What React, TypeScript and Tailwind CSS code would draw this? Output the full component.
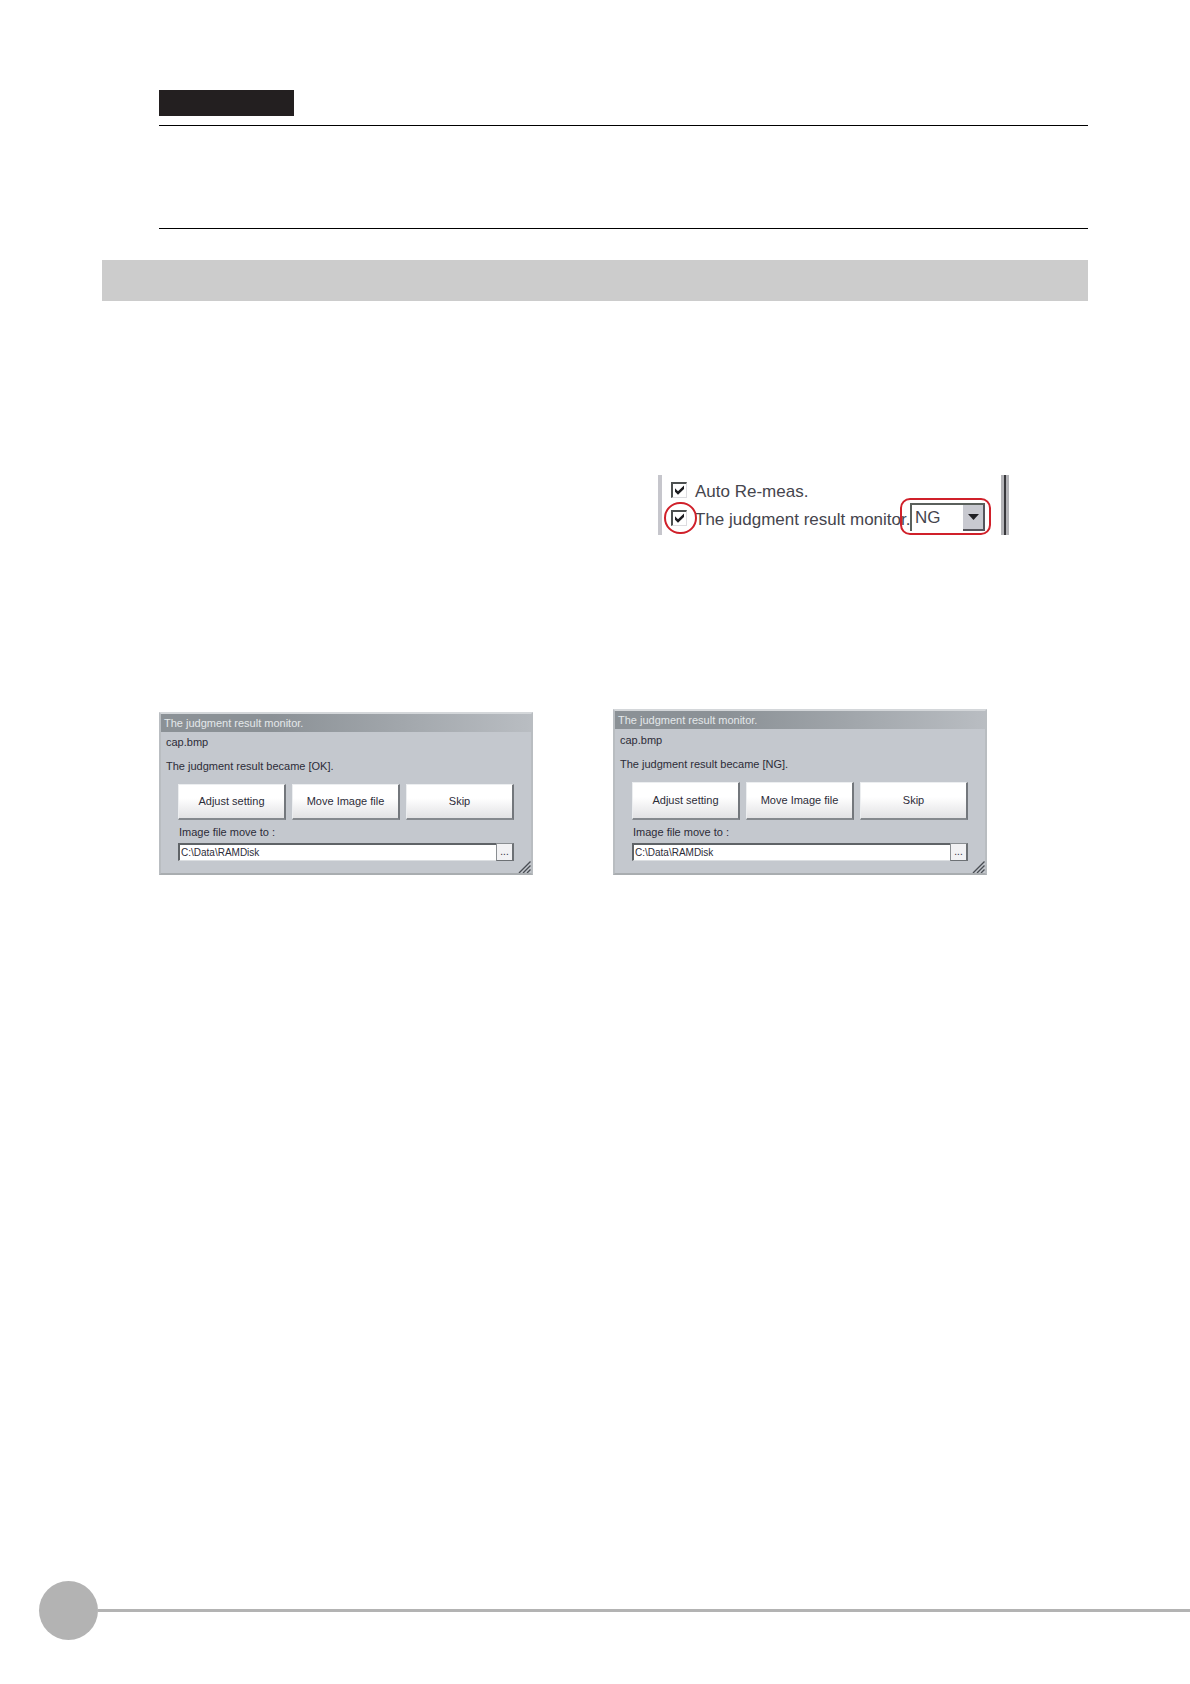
import { useId, useState } from 'react';
import clsx from 'clsx';

interface CheckOptionProps {
  label: string;
  circled?: boolean;
}

function CheckOption({ label, circled = false }: CheckOptionProps) {
  const [checked, setChecked] = useState(true);

  return (
    <label className="flex h-7 items-start gap-2 whitespace-nowrap text-[17px] leading-[34px] text-[#45454d]">
      <span className="relative mt-[7px] block size-4 shrink-0">
        <input
          type="checkbox"
          checked={checked}
          onChange={(e) => setChecked(e.target.checked)}
          className="block size-4 appearance-none border-t-2 border-l-2 border-r border-b border-t-[#4c5050] border-l-[#4c5050] border-r-[#dcdce0] border-b-[#dcdce0] bg-white"
        />
        {checked && (
          <svg className="pointer-events-none absolute inset-0 size-4" viewBox="0 0 16 16" fill="#1c1c20">
            <path d="M4 6.2 L7 9.2 L13 3.4 V7 L7 12.8 L4 9.8 Z" />
          </svg>
        )}
        {circled && (
          <span className="pointer-events-none absolute -inset-y-2 -right-[10px] -left-[7px] rounded-full border-2 border-[#d0202a]" />
        )}
      </span>
      {label}
    </label>
  );
}

function OptionsPanel() {
  return (
    <div className="relative flex h-[60px] w-[351px] overflow-hidden border-l-4 border-[#c6c6cc] pl-[9px]">
      <div className="flex flex-col">
        <CheckOption label="Auto Re-meas." />
        <CheckOption label="The judgment result monitor." circled />
      </div>

      {/* Result selector */}
      <div className="absolute top-[23px] right-[18px] h-[37px] w-[91px] rounded-[10px] border-2 border-[#d0202a] pt-[3px] pr-1 pl-2">
        <div className="relative flex h-7">
          <select
            aria-label="Judgment result"
            defaultValue="NG"
            className="w-full appearance-none border-t-2 border-l-2 border-t-[#5a605c] border-l-[#5a605c] bg-white pl-[3px] text-[17px] text-[#45454d]"
          >
            <option>NG</option>
            <option>OK</option>
          </select>
          <span className="pointer-events-none absolute top-[2px] right-0 bottom-0 flex w-[22px] items-center justify-center border-r-2 border-b-2 border-[#55555c] bg-[#c8c9d0]">
            <svg width="11" height="6" viewBox="0 0 11 6" fill="#202024">
              <path d="M0 0 H11 L5.5 6 Z" />
            </svg>
          </span>
        </div>
      </div>

      {/* Right edge of the panel */}
      <div className="absolute inset-y-0 right-0 w-2 border-r-[3px] border-l-[3px] border-[#b4b4b8] bg-[#38383c]" />
    </div>
  );
}

interface MonitorDialogProps {
  result: string;
  tall?: boolean;
}

const actions = ['Adjust setting', 'Move Image file', 'Skip'];

function MonitorDialog({ result, tall = false }: MonitorDialogProps) {
  const [path, setPath] = useState('C:\\Data\\RAMDisk');
  const pathId = useId();

  return (
    <section className="relative w-full max-w-[374px] border-2 border-t-[#d4d7da] border-l-[#b9bdc1] border-r-[#b9bdc1] border-b-[#a9adb0] bg-[#c4c8ce] text-[11px] text-[#2c2c38]">
      <h2 className="h-[18px] bg-linear-to-r from-[#8b9196] from-30% to-[#b9bdc2] pl-[3px] leading-[18px] text-[#e4e8ea]">
        The judgment result monitor.
      </h2>
      <div className={clsx('px-[5px]', tall ? 'pt-[3px]' : 'pt-[2px]')}>
        <p className="leading-4">cap.bmp</p>
        <p className="mt-2 leading-4">The judgment result became [{result}].</p>
      </div>

      <div className="px-[17px] pt-[10px] pb-3">
        <div className="grid grid-cols-3 gap-[6px]">
          {actions.map((action) => (
            <button
              key={action}
              type="button"
              className={clsx(
                'border border-t-[#eceef0] border-l-[#eceef0] border-r-2 border-b-2 border-r-[#73777c] border-b-[#85898e] bg-linear-to-b from-white from-40% to-[#e2e2e4] whitespace-nowrap',
                tall ? 'h-[38px]' : 'h-9'
              )}
            >
              {action}
            </button>
          ))}
        </div>
        <label htmlFor={pathId} className="mt-1 block pl-px leading-4">
          Image file move to :
        </label>
        <div className="mt-[3px] flex h-[18px]">
          <input
            id={pathId}
            type="text"
            value={path}
            onChange={(e) => setPath(e.target.value)}
            className="min-w-0 flex-1 border-t-2 border-l-2 border-b border-t-[#5f6367] border-l-[#5f6367] border-b-[#dcdfe2] bg-white pl-px text-[10px] leading-none outline-none"
          />
          <button
            type="button"
            aria-label="Browse"
            className="flex w-[18px] items-center justify-center border border-r-2 border-t-[#8a8e92] border-l-[#8a8e92] border-r-[#6d7175] border-b-[#6d7175] bg-[#f2f2f4] text-[10px] leading-none"
          >
            ...
          </button>
        </div>
      </div>

      <svg
        className="absolute right-0 bottom-0"
        width="13"
        height="12"
        viewBox="0 0 13 12"
        stroke="#4a4e54"
        strokeWidth="1.4"
      >
        <path d="M1 12 L12.5 0.5 M5 12 L12.5 4.5 M9 12 L12.5 8.5" />
      </svg>
    </section>
  );
}

export default function App() {
  return (
    <div className="flex min-h-screen flex-col bg-white pt-[90px] pb-11 font-['Liberation_Sans',Arial,sans-serif]">
      <main className="px-[102px]">
        {/* Note block */}
        <div className="pl-[57px]">
          <div className="h-[26px] w-[135px] bg-[#231f20]" />
          <div className="mt-[9px] h-[104px] border-y border-black" />
        </div>

        {/* Section heading band */}
        <div className="mt-[31px] h-[41px] bg-[#cccccc]" />

        <div className="mt-[174px] mr-[79px] flex justify-end">
          <OptionsPanel />
        </div>

        <div className="mt-[174px] flex items-end gap-20 pl-[57px]">
          <MonitorDialog result="OK" />
          <MonitorDialog result="NG" tall />
        </div>
      </main>

      <footer className="mt-auto flex items-center pl-[39px]">
        <div className="size-[59px] shrink-0 rounded-full bg-[#b3b3b3]" />
        <div className="h-[3px] flex-1 bg-[#b3b3b3]" />
      </footer>
    </div>
  );
}
